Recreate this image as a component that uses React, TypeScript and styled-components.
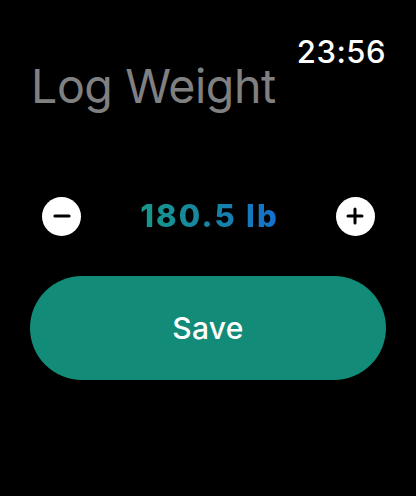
import { createGlobalStyle } from "styled-components";
import styled from "styled-components";

const GlobalStyle = createGlobalStyle`
  html, body {
    margin: 0;
    padding: 0;
    background: #000;
  }
  body {
    font-family: Inter, "Noto Sans", sans-serif;
  }
`;

const Screen = styled.div`
  width: 416px;
  height: 496px;
  background: #000;
  display: flex;
  flex-direction: column;
  box-sizing: border-box;
  padding: 0 30px;
`;

const StatusBar = styled.div`
  display: flex;
  justify-content: flex-end;
  padding-top: 33px;
`;

const Time = styled.span`
  color: #fff;
  font-size: 31px;
  font-weight: 500;
  line-height: 37px;
  letter-spacing: 0.5px;
`;

const Title = styled.h1`
  margin: -12px 0 0 1px;
  color: #808080;
  font-size: 46.5px;
  font-weight: 400;
  line-height: 56px;
  letter-spacing: -0.4px;
`;

const Stepper = styled.div`
  display: flex;
  align-items: center;
  justify-content: space-between;
  margin-top: 82px;
  padding: 0 11px 0 12px;
`;

const RoundButton = styled.button`
  width: 39px;
  height: 39px;
  border-radius: 50%;
  border: none;
  background: #fff;
  display: flex;
  align-items: center;
  justify-content: center;
  padding: 0;
`;

const Value = styled.span`
  font-size: 31px;
  font-weight: 800;
  line-height: 40px;
  letter-spacing: 2.2px;
  margin-right: -2px;
  background: linear-gradient(90deg, #17988a 0%, #1583a8 55%, #1570d0 100%);
  -webkit-background-clip: text;
  background-clip: text;
  color: transparent;
`;

const SaveButton = styled.button`
  margin-top: 40px;
  height: 104px;
  width: 356px;
  border: none;
  border-radius: 52px;
  background: #128c78;
  color: #fff;
  font-family: Inter, "Noto Sans", sans-serif;
  font-size: 30px;
  font-weight: 500;
  letter-spacing: 0.3px;
`;

const Minus = () => (
  <svg width="20" height="20" viewBox="0 0 20 20">
    <line x1="3" y1="10" x2="17" y2="10" stroke="#000" strokeWidth="3.2" strokeLinecap="round" />
  </svg>
);

const Plus = () => (
  <svg width="20" height="20" viewBox="0 0 20 20">
    <line x1="3" y1="10" x2="17" y2="10" stroke="#000" strokeWidth="3" strokeLinecap="round" />
    <line x1="10" y1="3" x2="10" y2="17" stroke="#000" strokeWidth="3" strokeLinecap="round" />
  </svg>
);

export default function App() {
  return (
    <Screen>
      <GlobalStyle />
      <StatusBar>
        <Time>23:56</Time>
      </StatusBar>
      <Title>Log Weight</Title>
      <Stepper>
        <RoundButton aria-label="Decrease">
          <Minus />
        </RoundButton>
        <Value>180.5 lb</Value>
        <RoundButton aria-label="Increase">
          <Plus />
        </RoundButton>
      </Stepper>
      <SaveButton>Save</SaveButton>
    </Screen>
  );
}
